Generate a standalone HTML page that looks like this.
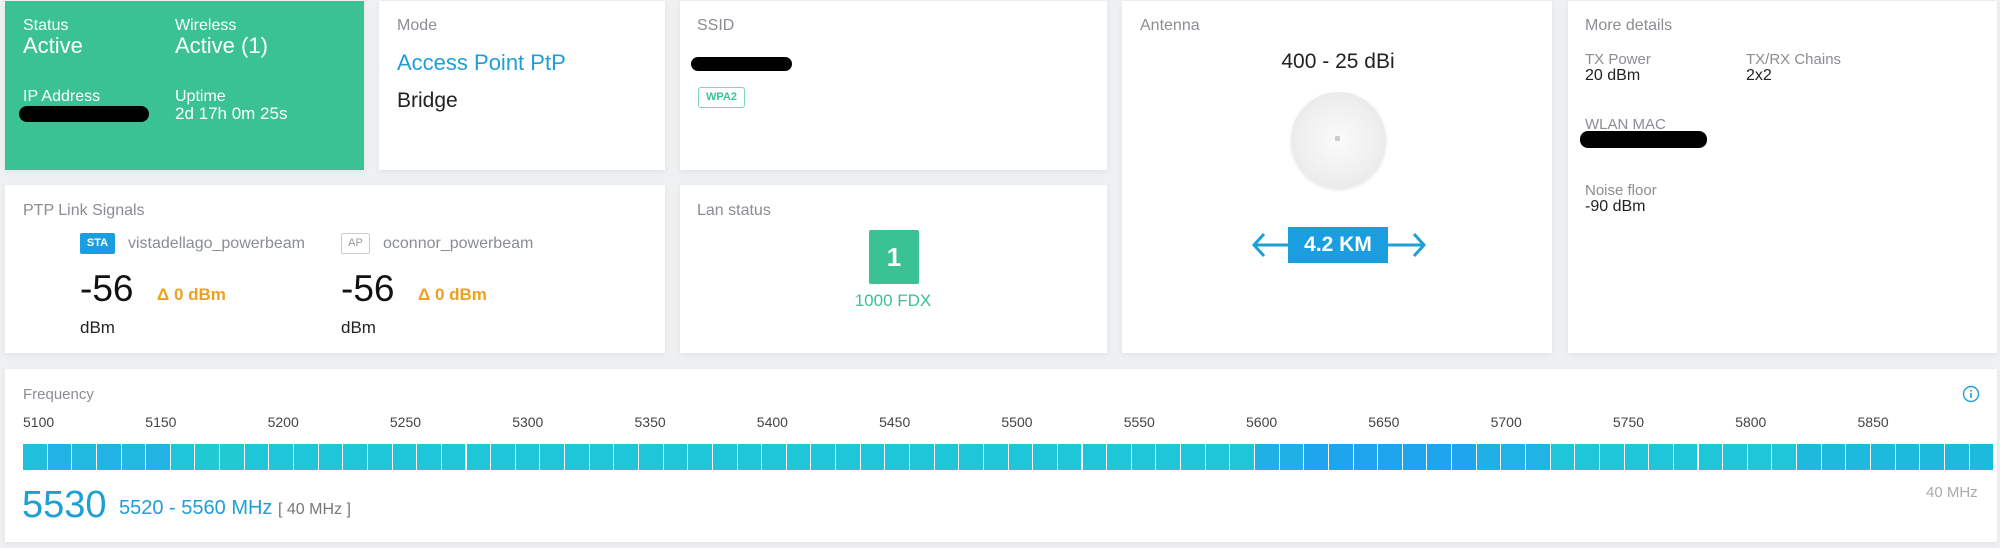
<!DOCTYPE html>
<html><head><meta charset="utf-8"><style>
*{margin:0;padding:0;box-sizing:border-box}
body{width:2000px;height:548px;background:#eef0f2;font-family:"Liberation Sans",sans-serif;position:relative;overflow:hidden;color:#222}
.c{position:absolute;background:#fff;box-shadow:0 2px 6px rgba(0,0,0,.06)}
.a{position:absolute;white-space:nowrap}
.t{font-size:16px;color:#8a8d91}
.g{color:#fff}
.red{position:absolute;background:#000;border-radius:8px}
.seg{position:absolute;top:444px;height:26px}
</style></head><body>
<div class="c" style="left:5px;top:1px;width:359px;height:169px;background:#3ac194"></div>
<div class="a g" style="left:23px;top:17px;font-size:16px">Status</div>
<div class="a g" style="left:23px;top:33px;font-size:22px">Active</div>
<div class="a g" style="left:175px;top:17px;font-size:16px">Wireless</div>
<div class="a g" style="left:175px;top:33px;font-size:22px">Active (1)</div>
<div class="a g" style="left:23px;top:88px;font-size:16px">IP Address</div>
<div class="red" style="left:19px;top:106px;width:130px;height:16px"></div>
<div class="a g" style="left:175px;top:88px;font-size:16px">Uptime</div>
<div class="a g" style="left:175px;top:104px;font-size:17px">2d 17h 0m 25s</div>

<div class="c" style="left:379px;top:1px;width:286px;height:169px"></div>
<div class="a t" style="left:397px;top:17px">Mode</div>
<div class="a" style="left:397px;top:50px;font-size:22px;color:#1e9fd6">Access Point PtP</div>
<div class="a" style="left:397px;top:89px;font-size:21px;color:#222">Bridge</div>

<div class="c" style="left:680px;top:1px;width:427px;height:169px"></div>
<div class="a t" style="left:697px;top:17px">SSID</div>
<div class="red" style="left:691px;top:57px;width:101px;height:14px"></div>
<div class="a" style="left:698px;top:87px;width:47px;height:21px;border:1px solid #7fd6b6;border-radius:3px;color:#3ac194;font-size:11px;font-weight:bold;text-align:center;line-height:19px">WPA2</div>

<div class="c" style="left:1122px;top:1px;width:430px;height:352px"></div>
<div class="a t" style="left:1140px;top:17px">Antenna</div>
<div class="a" style="left:1338px;top:50px;transform:translateX(-50%);font-size:21px;color:#222">400 - 25 dBi</div>
<div class="a" style="left:1291px;top:92px;width:95px;height:97px;border-radius:50%;background:radial-gradient(circle at 50% 50%,#fbfbfb 0,#eee 60%,#e2e2e2 100%);box-shadow:0 1px 3px rgba(0,0,0,.1)"></div>
<div class="a" style="left:1335px;top:136px;width:5px;height:5px;background:#ccc;border-radius:1px"></div>
<svg class="a" style="left:1250px;top:225px" width="180" height="40" viewBox="0 0 180 40"><g stroke="#1e9fd6" stroke-width="3" fill="none"><path d="M4 20H40M14 9L4 20L14 31"/><path d="M138 20H174M164 9L174 20L164 31"/></g></svg>
<div class="a" style="left:1288px;top:227px;width:100px;height:36px;background:#1a9ee0;color:#fff;font-size:21px;font-weight:bold;text-align:center;line-height:36px">4.2 KM</div>

<div class="c" style="left:1568px;top:1px;width:429px;height:352px"></div>
<div class="a t" style="left:1585px;top:17px">More details</div>
<div class="a t" style="left:1585px;top:51px;font-size:15px">TX Power</div>
<div class="a" style="left:1585px;top:67px;font-size:16px">20 dBm</div>
<div class="a t" style="left:1746px;top:51px;font-size:15px">TX/RX Chains</div>
<div class="a" style="left:1746px;top:67px;font-size:16px">2x2</div>
<div class="a t" style="left:1585px;top:116px;font-size:15px">WLAN MAC</div>
<div class="red" style="left:1580px;top:131px;width:127px;height:17px"></div>
<div class="a t" style="left:1585px;top:182px;font-size:15px">Noise floor</div>
<div class="a" style="left:1585px;top:198px;font-size:16px">-90 dBm</div>

<div class="c" style="left:5px;top:185px;width:660px;height:168px"></div>
<div class="a t" style="left:23px;top:202px">PTP Link Signals</div>
<div class="a" style="left:80px;top:233px;width:35px;height:21px;background:#1a9ee0;color:#fff;font-size:11px;font-weight:bold;text-align:center;line-height:21px;border-radius:2px">STA</div>
<div class="a t" style="left:128px;top:235px">vistadellago_powerbeam</div>
<div class="a" style="left:341px;top:233px;width:29px;height:21px;border:1px solid #ccc;color:#999;font-size:11px;text-align:center;line-height:19px;border-radius:2px">AP</div>
<div class="a t" style="left:383px;top:235px">oconnor_powerbeam</div>
<div class="a" style="left:80px;top:268px;font-size:37px;color:#111">-56</div>
<div class="a" style="left:157px;top:285px;font-size:17px;font-weight:bold;color:#eea020">Δ 0 dBm</div>
<div class="a" style="left:80px;top:318px;font-size:17px">dBm</div>
<div class="a" style="left:341px;top:268px;font-size:37px;color:#111">-56</div>
<div class="a" style="left:418px;top:285px;font-size:17px;font-weight:bold;color:#eea020">Δ 0 dBm</div>
<div class="a" style="left:341px;top:318px;font-size:17px">dBm</div>

<div class="c" style="left:680px;top:185px;width:427px;height:168px"></div>
<div class="a t" style="left:697px;top:202px">Lan status</div>
<div class="a" style="left:869px;top:230px;width:50px;height:54px;background:#3ac194;border-radius:2px;color:#fff;font-size:26px;font-weight:bold;text-align:center;line-height:54px">1</div>
<div class="a" style="left:893px;top:291px;transform:translateX(-50%);font-size:17px;color:#3ac194">1000 FDX</div>

<div class="c" style="left:5px;top:369px;width:1992px;height:173px"></div>
<div class="a t" style="left:23px;top:386px;font-size:15px">Frequency</div>
<svg class="a" style="left:1962px;top:385px" width="18" height="18" viewBox="0 0 18 18"><circle cx="9" cy="9" r="7.5" fill="none" stroke="#1e9fd6" stroke-width="1.4"/><path d="M9 8v5M9 5v1.5" stroke="#1e9fd6" stroke-width="1.6"/></svg>
<div id="lbl"></div>
<div id="bar"></div>
<div class="a" style="left:22px;top:484px;font-size:38px;color:#1e9fd6">5530</div>
<div class="a" style="left:119px;top:497px;font-size:20px;color:#1e9fd6">5520 - 5560 MHz <span style="color:#777;font-size:16px">[ 40 MHz ]</span></div>
<div class="a" style="left:1926px;top:484px;font-size:15px;color:#aaa">40 MHz</div>
<script>
var l='',b='';
for(var k=0;k<16;k++){l+='<div class="a" style="left:'+(23+k*122.3)+'px;top:414px;font-size:14px;color:#444">'+(5100+k*50)+'</div>';}
for(var i=0;i<80;i++){var c='#1ec6d8';
if(i==0)c='#1fc0dc';else if(i>=1&&i<=5)c=(i%2?'#22b2e3':'#20b9df');
else if(i==7||i==8)c='#20cad2';
else if(i>=50&&i<=59)c=(i>=52&&i<=58)?'#1fa5ec':'#20b0e6';
else if(i==60||i==61)c='#1fb4e3';
else if(i>=72)c='#1ebade';
b+='<div class="seg" style="left:'+(23+i*24.64)+'px;width:23.6px;background:'+c+'"></div>';}
document.getElementById('lbl').innerHTML=l;document.getElementById('bar').innerHTML=b;
</script>
</body></html>
